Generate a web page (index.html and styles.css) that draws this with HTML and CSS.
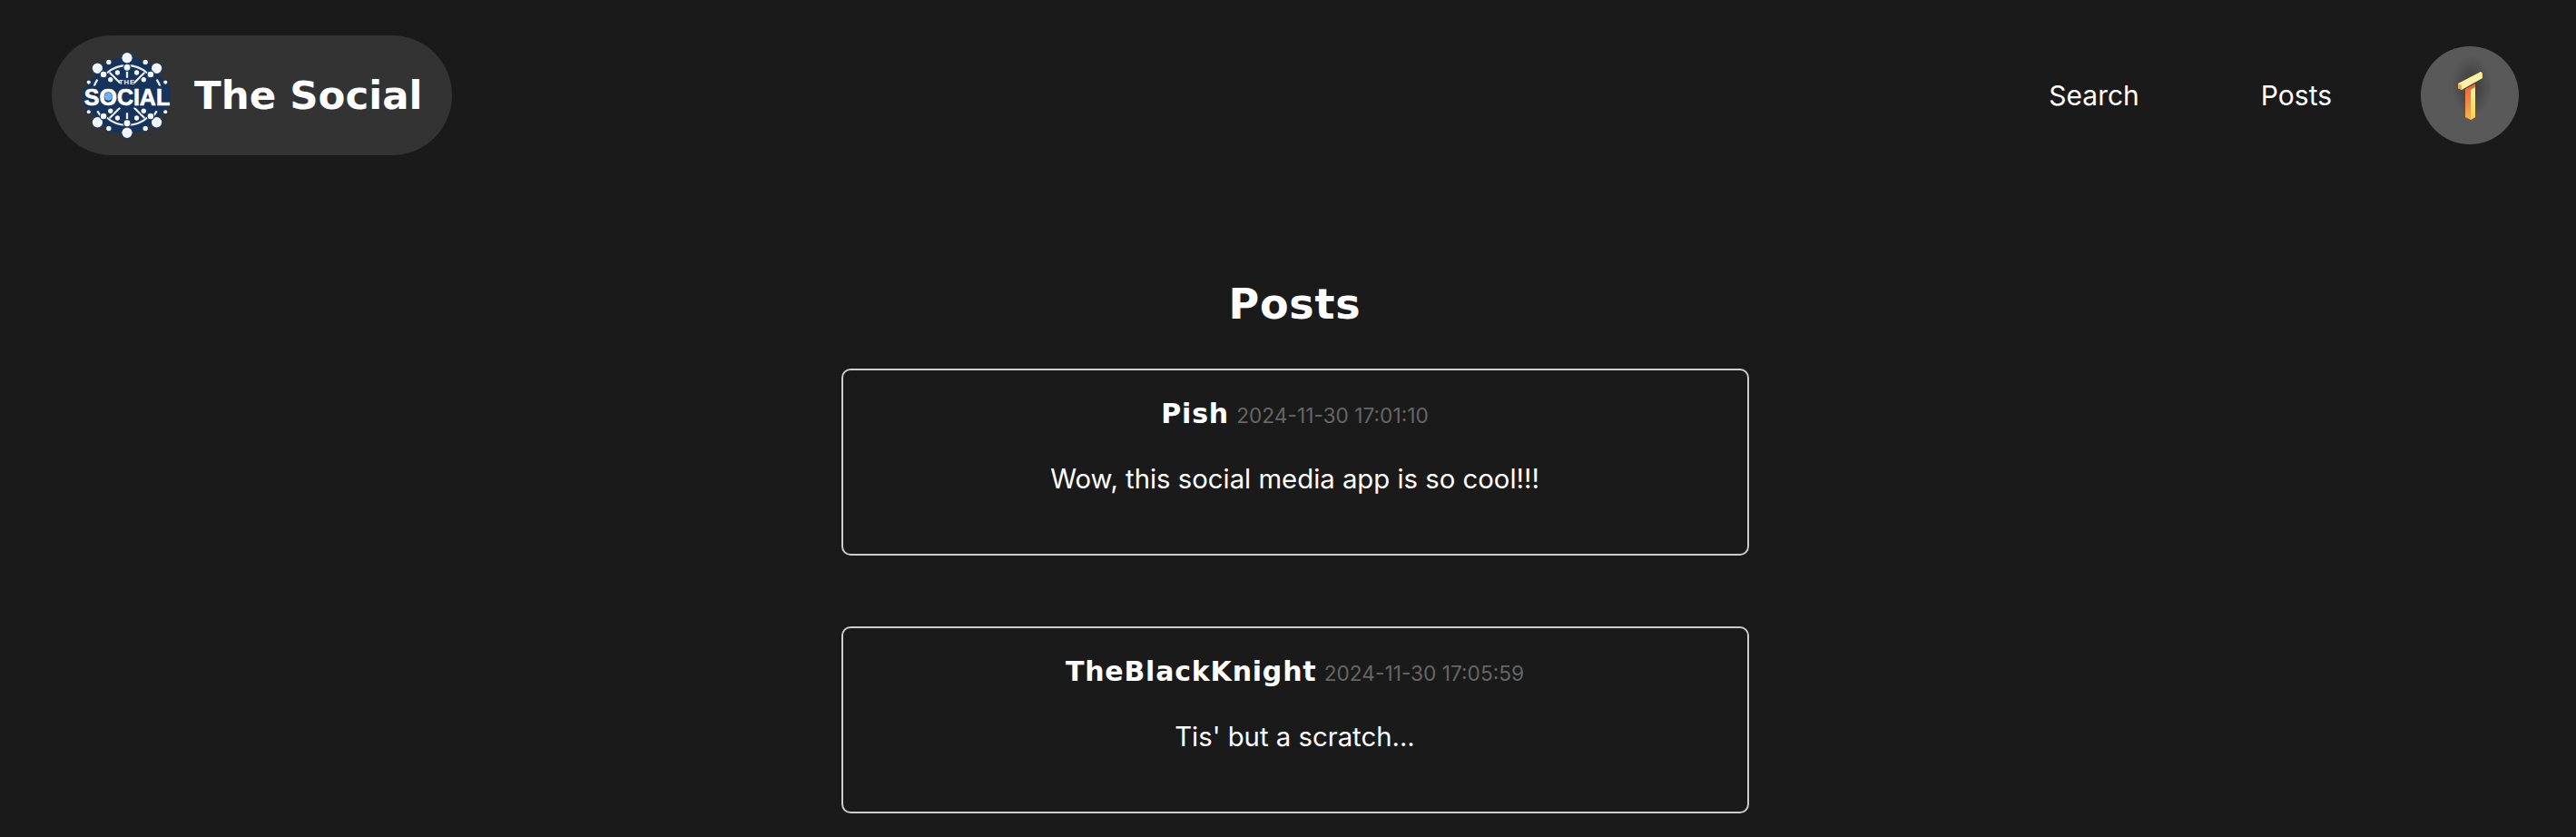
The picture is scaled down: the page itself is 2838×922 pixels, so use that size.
FILE: index.html
```html
<!DOCTYPE html>
<html lang="en">
<head>
  <meta charset="UTF-8" />
  <title>The Social</title>
  <link rel="stylesheet" href="styles.css">
</head>
<body>
  <header class="topbar">
    <a class="brand" href="#">
      <svg class="brand-logo" viewBox="0 0 100 100">
        <circle cx="50" cy="50" r="44" fill="#16335b"/>
        <g fill="none" stroke="#eef3fa" stroke-width="2.4">
          <path d="M26 25A36 36 0 0 1 74 25"/>
          <path d="M26 75A36 36 0 0 0 74 75"/>
          <path d="M16 32A38 38 0 0 0 12 40M84 32A38 38 0 0 1 88 40"/>
          <path d="M16 68A38 38 0 0 0 20 74M84 68A38 38 0 0 1 80 74"/>
          <path d="M50 10V30M50 70V90M30 24L42 36M70 24L58 36M30 76L42 64M70 76L58 64"/>
        </g>
        <g fill="#f3f6fb" stroke="#16335b" stroke-width="1.2">
          <circle cx="50" cy="7" r="6.5"/><circle cx="50" cy="93" r="6.5"/>
          <circle cx="16" cy="19" r="6.5"/><circle cx="84" cy="19" r="6.5"/>
          <circle cx="16" cy="81" r="6.5"/><circle cx="84" cy="81" r="6.5"/>
          <circle cx="29" cy="12" r="3.4"/><circle cx="71" cy="12" r="3.4"/>
          <circle cx="29" cy="88" r="3.4"/><circle cx="71" cy="88" r="3.4"/>
          <circle cx="50" cy="18" r="4.2"/><circle cx="50" cy="82" r="4.2"/>
          <circle cx="23" cy="26" r="4"/><circle cx="77" cy="26" r="4"/>
          <circle cx="23" cy="74" r="4"/><circle cx="77" cy="74" r="4"/>
          <circle cx="31" cy="32" r="3.4"/><circle cx="69" cy="32" r="3.4"/>
          <circle cx="31" cy="68" r="3.4"/><circle cx="69" cy="68" r="3.4"/>
          <circle cx="39" cy="24" r="3.4"/><circle cx="61" cy="24" r="3.4"/>
          <circle cx="39" cy="76" r="3.4"/><circle cx="61" cy="76" r="3.4"/>
          <circle cx="6" cy="35" r="2.8"/><circle cx="94" cy="35" r="2.8"/>
          <circle cx="6" cy="69" r="2.8"/><circle cx="94" cy="69" r="2.8"/>
        </g>
        <rect x="0" y="39" width="100" height="25" rx="5" fill="#16335b"/>
        <text class="logo-the" x="50" y="38" text-anchor="middle">THE</text>
        <text class="logo-word" x="50" y="61" text-anchor="middle">SOCIAL</text>
        <circle cx="28.5" cy="51.5" r="4.6" fill="#6db1f5"/>
      </svg>
      <span class="brand-name">The Social</span>
    </a>
    <nav class="nav">
      <a href="#">Search</a>
      <a href="#">Posts</a>
      <span class="avatar">
        <svg class="avatar-mark" viewBox="0 0 108 108">
          <defs>
            <linearGradient id="stem-left" x1="0" y1="0" x2="0" y2="1">
              <stop offset="0" stop-color="#e8603a"/>
              <stop offset="1" stop-color="#fdb04c"/>
            </linearGradient>
            <linearGradient id="stem-right" x1="0" y1="0" x2="0" y2="1">
              <stop offset="0" stop-color="#fff2a0"/>
              <stop offset="1" stop-color="#fdd050"/>
            </linearGradient>
            <radialGradient id="shade">
              <stop offset="0" stop-color="#333" stop-opacity=".8"/>
              <stop offset="1" stop-color="#333" stop-opacity="0"/>
            </radialGradient>
          </defs>
          <ellipse cx="56" cy="44" rx="22" ry="34" fill="url(#shade)"/>
          <polygon points="49,47 60,41 60,78 55,81 49,78" fill="url(#stem-left)"/>
          <polygon points="55,48 60,45 60,78 55,81" fill="url(#stem-right)"/>
          <polygon points="41,41 66,28 68,30 68,35 45,48 41,46" fill="#fff4a6"/>
          <polygon points="41,41 45,43 45,48 41,46" fill="#fba94a"/>
          <polygon points="66,28 68,30 68,35 66,33" fill="#ffe27a"/>
        </svg>
      </span>
    </nav>
  </header>

  <main class="content">
    <h1>Posts</h1>
    <section class="posts">
      <article class="post">
        <div class="post-head"><span class="author">Pish</span> <span class="stamp">2024-11-30 17:01:10</span></div>
        <p>Wow, this social media app is so cool!!!</p>
      </article>
      <article class="post">
        <div class="post-head"><span class="author">TheBlackKnight</span> <span class="stamp">2024-11-30 17:05:59</span></div>
        <p>Tis' but a scratch...</p>
      </article>
    </section>
  </main>
</body>
</html>
```

FILE: styles.css
```css
body {
  margin: 0;
  background: #1a1a1a;
  color: #fff;
  font-family: 'Inter', 'Lato', sans-serif;
  font-size: 29.3px;
}
a {
  color: inherit;
  text-decoration: none;
}
.topbar {
  height: 204px;
  box-sizing: border-box;
  padding: 6px 63px 0 57px;
  display: flex;
  justify-content: space-between;
  align-items: center;
}
.brand {
  display: flex;
  align-items: center;
  gap: 26px;
  height: 132px;
  width: 441px;
  box-sizing: border-box;
  padding-left: 35px;
  background: #333;
  border-radius: 66px;
}
.brand-logo {
  width: 96px;
  height: 96px;
  flex: none;
}
.logo-the {
  font: 700 8px 'Liberation Sans', sans-serif;
  fill: #eef3fa;
  letter-spacing: 1px;
}
.logo-word {
  font: 700 26px 'Liberation Sans', sans-serif;
  fill: #fff;
  stroke: #fff;
  stroke-width: .7px;
}
.brand-name {
  font-family: 'DejaVu Sans', sans-serif;
  font-weight: 700;
  font-size: 43.5px;
  white-space: nowrap;
}
.nav {
  display: flex;
  align-items: center;
  gap: 134px;
  font-size: 30px;
}
.avatar {
  width: 108px;
  height: 108px;
  margin-left: -36px;
  border-radius: 50%;
  background: #595959;
  display: block;
}
.avatar-mark {
  display: block;
  width: 108px;
  height: 108px;
}
.content {
  padding-left: 15px;
  display: flex;
  flex-direction: column;
  align-items: center;
}
h1 {
  margin: 105px 0 5px;
  font-family: 'DejaVu Sans', sans-serif;
  font-weight: 700;
  font-size: 46px;
  letter-spacing: .8px;
  line-height: 52px;
}
.posts {
  margin-top: 40px;
  display: flex;
  flex-direction: column;
  gap: 78px;
}
.post {
  width: 1000px;
  height: 206px;
  box-sizing: border-box;
  padding-top: 28px;
  border: 2px solid #ccc;
  border-radius: 10px;
  text-align: center;
}
.post-head {
  line-height: 40px;
}
.author {
  font-family: 'DejaVu Sans', sans-serif;
  font-weight: 700;
  font-size: 30px;
  letter-spacing: .8px;
}
.stamp {
  font-size: 22.7px;
  color: #666;
}
.post p {
  margin: 30px 0 0;
  line-height: 40px;
}
```
